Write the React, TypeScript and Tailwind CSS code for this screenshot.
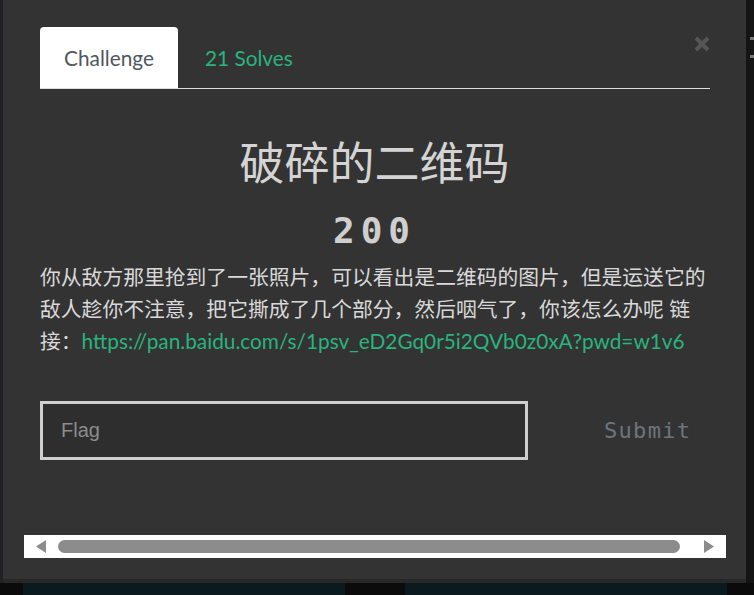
import React, { useState } from "react";

const LATO = "font-['Lato','Noto_Sans_CJK_SC',sans-serif]";
const SQUARE = "font-['DejaVu_Sans_Mono',monospace]";

export default function App() {
  const [tab, setTab] = useState<"challenge" | "solves">("challenge");
  const [flag, setFlag] = useState("");

  return (
    <div className="w-[754px] h-[595px] overflow-hidden bg-[#0b0b0b] flex flex-col">
      <div className="flex h-[583px]">
        {/* left page edge */}
        <div className="w-[3px] bg-[#1f2124]" />

        {/* modal */}
        <div className="relative w-[743px] h-[583px] bg-[#333333] border-b-[4px] border-[#282828] flex flex-col px-[37px]">
          <button className="absolute top-[36px] right-[36px]">
            <svg width="16" height="16" viewBox="0 0 16 16">
              <path d="M2 2 L14 14 M14 2 L2 14" stroke="#555555" strokeWidth="4" strokeLinecap="butt" />
            </svg>
          </button>

          {/* tabs */}
          <div className={`mt-[27px] w-[670px] flex border-b border-[#dedede] ${LATO}`}>
            <button
              onClick={() => setTab("challenge")}
              className="h-[61px] w-[138px] bg-white rounded-t-[4px] text-[20.8px] text-[#4e5860] flex items-center justify-center"
            >
              Challenge
            </button>
            <button
              onClick={() => setTab("solves")}
              className="h-[61px] px-[27px] text-[20.8px] text-[#29b47f] flex items-center"
            >
              21 Solves
            </button>
          </div>

          {tab === "challenge" && (
            <>
              <h2 className="mt-[45px] text-center text-[45px] leading-[53px] text-[#d4d4d4] font-['Noto_Sans_CJK_SC',sans-serif] font-normal">
                破碎的二维码
              </h2>
              <div className={`mt-[22px] text-center text-[36px] leading-[43px] font-bold tracking-[6px] text-[#cfcfcf] ${SQUARE}`}>
                200
              </div>
              <p className={`mt-[9px] w-[676px] text-[20.8px] leading-[32px] text-[#d9d9d9] ${LATO}`}>
                你从敌方那里抢到了一张照片，可以看出是二维码的图片，但是运送它的敌人趁你不注意，把它撕成了几个部分，然后咽气了，你该怎么办呢 链接：
                <a className="text-[#29b47f]">https://pan.baidu.com/s/1psv_eD2Gq0r5i2QVb0z0xA?pwd=w1v6</a>
              </p>

              <div className="mt-[44px] flex items-center">
                <input
                  value={flag}
                  onChange={e => setFlag(e.target.value)}
                  placeholder="Flag"
                  className="w-[488px] h-[59px] border-[3px] border-[#cfcfcf] bg-[#2e2e2e] px-[18px] text-[20px] text-[#dddddd] placeholder:text-[#8c8c8c] outline-none font-['Liberation_Sans',sans-serif]"
                />
                <button className={`ml-[76px] text-[22px] tracking-[1.3px] text-[#6c757d] ${SQUARE}`}>Submit</button>
              </div>
            </>
          )}

          {/* horizontal scrollbar */}
          <div className="mt-auto mb-[21px] -ml-[16px] w-[702px] h-[23px] bg-white flex items-center px-[12px] gap-[12px]">
            <svg width="10" height="13" viewBox="0 0 10 13">
              <path d="M10 0 L0 6.5 L10 13 Z" fill="#8c8c8c" />
            </svg>
            <div className="flex-1 h-[13px] rounded-full bg-[#8c8c8c] mr-[12px]" />
            <svg width="10" height="13" viewBox="0 0 10 13">
              <path d="M0 0 L10 6.5 L0 13 Z" fill="#8c8c8c" />
            </svg>
          </div>
        </div>

        {/* right page edge */}
        <div className="flex-1 bg-[#141414] flex flex-col items-end pt-[37px] gap-[15px]">
          <div className="w-[4px] h-[3px] bg-[#777777]" />
          <div className="w-[4px] h-[3px] bg-[#777777]" />
        </div>
      </div>

      {/* page cards behind the modal */}
      <div className="flex-1 flex gap-[60px] pl-[23px]">
        <div className="w-[322px] bg-[#0b1a1f]" />
        <div className="w-[322px] bg-[#0b1a1f]" />
      </div>
    </div>
  );
}
